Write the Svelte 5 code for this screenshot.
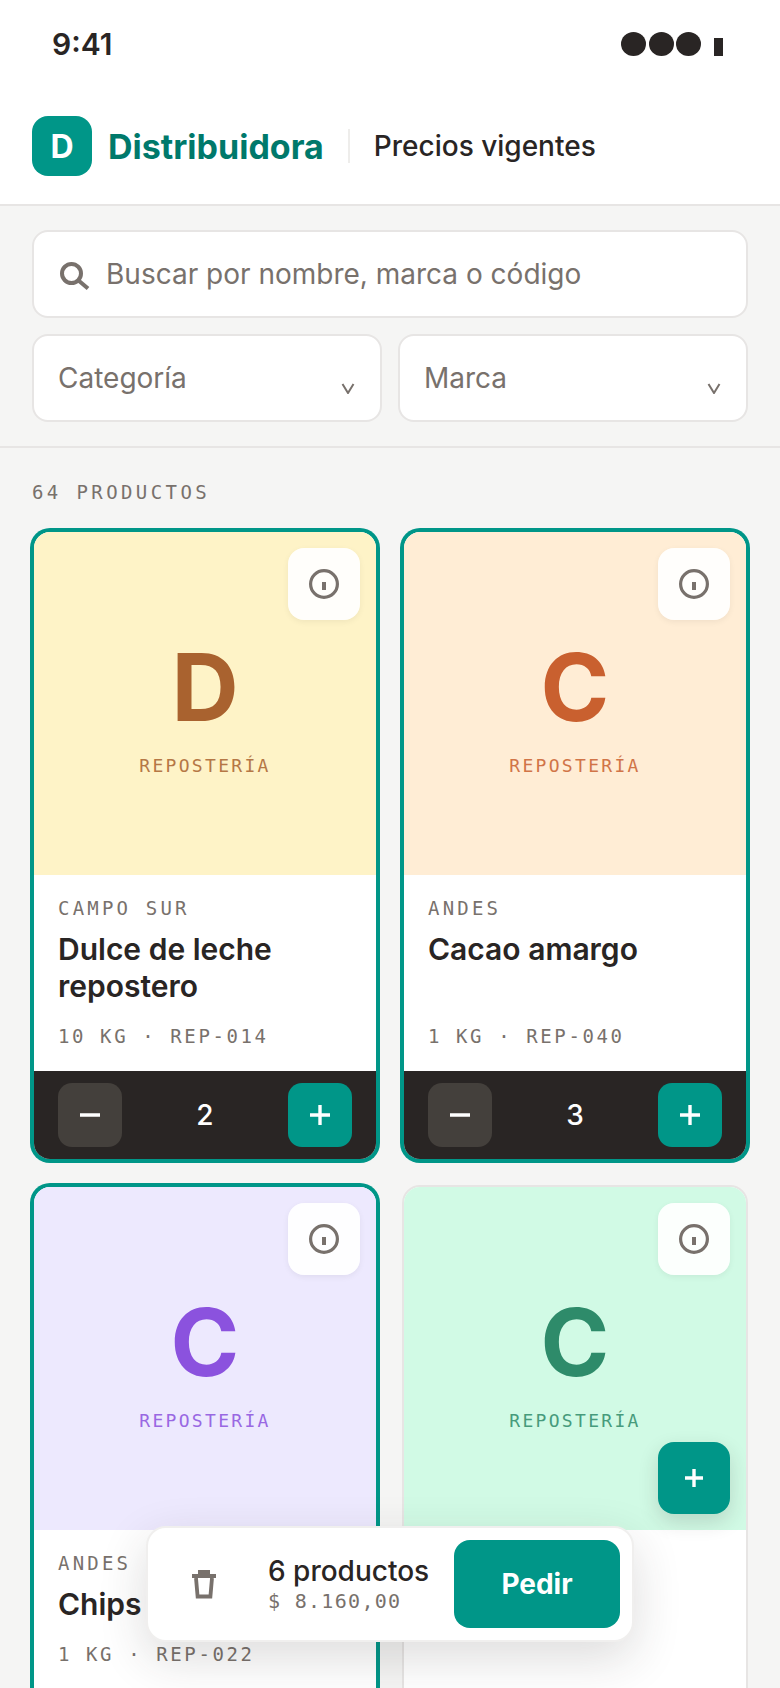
<script>
    const products = [
        { letter: "D", cat: "Repostería", brand: "Campo Sur", name: "Dulce de leche repostero", meta: "10 KG · REP-014", qty: 2, tone: "amber" },
        { letter: "C", cat: "Repostería", brand: "Andes", name: "Cacao amargo", meta: "1 KG · REP-040", qty: 3, tone: "orange" },
        { letter: "C", cat: "Repostería", brand: "Andes", name: "Chips de chocolate", meta: "1 KG · REP-022", qty: 1, tone: "violet" },
        { letter: "C", cat: "Repostería", brand: "Campo Sur", name: "Coco rallado", meta: "1 KG · REP-007", qty: 0, tone: "green" }
    ];
</script>

<div class="page">
    <div class="status">
        <span class="time">9:41</span>
        <div class="signal">
            <i class="dot"></i><i class="dot"></i><i class="dot"></i><i class="batt"></i>
        </div>
    </div>

    <header>
        <div class="logo">D</div>
        <span class="brandname">Distribuidora</span>
        <span class="sep"></span>
        <span class="subtitle">Precios vigentes</span>
    </header>

    <section class="filters">
        <div class="search">
            <svg width="32" height="32" viewBox="0 0 32 32" fill="none" stroke="currentColor" stroke-width="4">
                <circle cx="13.5" cy="15.5" r="9.5" />
                <path d="M20.5 22.5 L30 30.5" />
            </svg>
            <span>Buscar por nombre, marca o código</span>
        </div>
        <div class="selects">
            <div class="select">
                <span>Categoría</span>
                <svg class="chev" width="14" height="11" viewBox="0 0 14 11" fill="none" stroke="currentColor" stroke-width="2"><path d="M1.5 1 L7 10 L12.5 1" /></svg>
            </div>
            <div class="select">
                <span>Marca</span>
                <svg class="chev" width="14" height="11" viewBox="0 0 14 11" fill="none" stroke="currentColor" stroke-width="2"><path d="M1.5 1 L7 10 L12.5 1" /></svg>
            </div>
        </div>
    </section>

    <main>
        <div class="count">64 PRODUCTOS</div>
        <div class="grid">
            {#each products as p}
                <article class="card {p.tone}" class:selected={p.qty > 0}>
                    <div class="thumb">
                        <button class="info" aria-label="Información">
                            <svg width="32" height="32" viewBox="0 0 32 32" fill="none" stroke="#78716c" stroke-width="3.2">
                                <circle cx="16" cy="16" r="13.4" />
                                <path d="M16 14 V22" stroke-width="4" />
                            </svg>
                        </button>
                        <span class="letter">{p.letter}</span>
                        <span class="cat">{p.cat.toUpperCase()}</span>
                        {#if p.qty === 0}
                            <button class="add" aria-label="Agregar">
                                <svg width="24" height="24" viewBox="0 0 24 24" stroke="#fff" stroke-width="3.4"><path d="M12 3 V21 M3 12 H21" /></svg>
                            </button>
                        {/if}
                    </div>
                    <div class="body">
                        <div class="brand">{p.brand.toUpperCase()}</div>
                        <div class="name">{p.name}</div>
                        <div class="meta">{p.meta}</div>
                    </div>
                    {#if p.qty > 0}
                        <div class="qty">
                            <button class="minus" aria-label="Quitar">
                                <svg width="24" height="24" viewBox="0 0 24 24" stroke="#fff" stroke-width="3.4"><path d="M2 12 H22" /></svg>
                            </button>
                            <span>{p.qty}</span>
                            <button class="plus" aria-label="Sumar">
                                <svg width="24" height="24" viewBox="0 0 24 24" stroke="#fff" stroke-width="3.4"><path d="M12 2 V22 M2 12 H22" /></svg>
                            </button>
                        </div>
                    {/if}
                </article>
            {/each}
        </div>
    </main>

    <div class="cart">
        <button class="trash" aria-label="Vaciar">
            <svg width="26" height="30" viewBox="0 0 26 30" fill="none" stroke="#78716c">
                <path d="M7 1 H19 V5 H25 V9 H1 V5 H7 Z" fill="#78716c" stroke="none" />
                <path d="M5 9 L6.6 27.5 H19.4 L21 9" stroke-width="3.8" />
            </svg>
        </button>
        <div class="totals">
            <span class="items">6 productos</span>
            <span class="price">$ 8.160,00</span>
        </div>
        <button class="order">Pedir</button>
    </div>
</div>

<style>
    :global(body) {
        margin: 0;
        background: #f5f5f4;
    }

    .page {
        position: relative;
        width: 780px;
        height: 1688px;
        overflow: hidden;
        background: #f5f5f4;
        color: #292524;
        font-family: Inter, "Liberation Sans", sans-serif;
    }

    button {
        border: none;
        padding: 0;
        font-family: inherit;
        display: flex;
        align-items: center;
        justify-content: center;
    }

    .status {
        height: 88px;
        background: #fff;
        display: flex;
        align-items: center;
        justify-content: space-between;
        padding: 0 57px 0 52px;
        box-sizing: border-box;
    }

    .time {
        font-size: 30px;
        font-weight: 600;
    }

    .signal {
        display: flex;
        align-items: flex-end;
        gap: 2.5px;
    }

    .dot {
        width: 25px;
        height: 24px;
        border-radius: 50%;
        background: #292524;
    }

    .batt {
        width: 9px;
        height: 18px;
        margin-left: 10.5px;
        background: #292524;
    }

    header {
        display: flex;
        align-items: center;
        background: #fff;
        padding: 28px 32px;
        border-bottom: 2px solid #e7e5e4;
    }

    .logo {
        width: 60px;
        height: 60px;
        border-radius: 16px;
        background: #009688;
        color: #fff;
        font-size: 32px;
        font-weight: 700;
        display: flex;
        align-items: center;
        justify-content: center;
    }

    .brandname {
        margin-left: 16px;
        font-size: 34px;
        font-weight: 700;
        color: #00796b;
    }

    .sep {
        width: 2px;
        height: 34px;
        margin: 0 24px;
        background: #eeedeb;
    }

    .subtitle {
        font-size: 28px;
        font-weight: 500;
    }

    .filters {
        padding: 24px 32px;
        border-bottom: 2px solid #e7e5e4;
        display: flex;
        flex-direction: column;
        gap: 16px;
    }

    .search, .select {
        height: 88px;
        box-sizing: border-box;
        background: #fff;
        border: 2px solid #e7e5e4;
        border-radius: 16px;
        display: flex;
        align-items: center;
        color: #78716c;
        font-size: 28px;
    }

    .search {
        padding: 0 24px;
        gap: 16px;
    }

    .selects {
        display: grid;
        grid-template-columns: 1fr 1fr;
        gap: 16px;
    }

    .select {
        justify-content: space-between;
        padding: 0 25px 0 24px;
    }

    .chev {
        margin-top: 20px;
    }

    main {
        padding: 31px 32px 0;
    }

    .count {
        font-family: "DejaVu Sans Mono", monospace;
        font-size: 19px;
        line-height: 26px;
        letter-spacing: 3.4px;
        color: #78716c;
        margin-bottom: 25px;
    }

    .grid {
        display: grid;
        grid-template-columns: 1fr 1fr;
        gap: 24px;
    }

    .card {
        background: #fff;
        border: 2px solid #e7e5e4;
        border-radius: 18px;
        overflow: hidden;
        display: flex;
        flex-direction: column;
    }

    .card.selected {
        border-color: #009688;
        box-shadow: 0 0 0 2px #009688;
    }

    .thumb {
        position: relative;
        height: 343px;
        display: flex;
        flex-direction: column;
        align-items: center;
        justify-content: center;
    }

    .amber .thumb { background: #fef3c7; color: #a9622f; }
    .orange .thumb { background: #ffedd5; color: #c9602f; }
    .violet .thumb { background: #ede9fe; color: #8b52de; }
    .green .thumb { background: #d1fae5; color: #2e8b6a; }

    .letter {
        font-size: 93px;
        font-weight: 700;
        line-height: 116px;
    }

    .cat {
        margin-top: 9px;
        font-family: "DejaVu Sans Mono", monospace;
        font-size: 18px;
        line-height: 24px;
        letter-spacing: 2.3px;
        opacity: 0.85;
    }

    .info {
        position: absolute;
        top: 16px;
        right: 16px;
        width: 72px;
        height: 72px;
        border-radius: 16px;
        background: rgba(255, 255, 255, 0.92);
        box-shadow: 0 2px 6px rgba(0, 0, 0, 0.06);
    }

    .add {
        position: absolute;
        right: 16px;
        bottom: 16px;
        width: 72px;
        height: 72px;
        border-radius: 16px;
        background: #009688;
        box-shadow: 0 8px 20px rgba(41, 37, 36, 0.16);
    }

    .body {
        flex: 1;
        display: flex;
        flex-direction: column;
        padding: 20px 24px 22px;
    }

    .brand, .meta {
        font-family: "DejaVu Sans Mono", monospace;
        font-size: 19px;
        line-height: 26px;
        color: #78716c;
    }

    .brand {
        letter-spacing: 3.2px;
    }

    .name {
        margin: 10px 0 18px;
        font-size: 30px;
        line-height: 37px;
        font-weight: 600;
    }

    .meta {
        margin-top: auto;
        letter-spacing: 2.6px;
    }

    .qty {
        background: #292524;
        padding: 12px 24px;
        display: flex;
        align-items: center;
        justify-content: space-between;
        color: #fff;
        font-size: 28px;
        font-weight: 500;
    }

    .qty button {
        width: 64px;
        height: 64px;
        border-radius: 14px;
    }

    .minus {
        background: #44403c;
    }

    .plus {
        background: #009688;
    }

    .cart {
        position: absolute;
        left: 146px;
        bottom: 46px;
        width: 488px;
        box-sizing: border-box;
        padding: 12px;
        background: #fff;
        border: 2px solid #f0efee;
        border-radius: 20px;
        box-shadow: 0 16px 48px rgba(41, 37, 36, 0.16);
        display: flex;
        align-items: center;
        gap: 20px;
    }

    .trash {
        width: 88px;
        height: 88px;
        background: transparent;
    }

    .totals {
        flex: 1;
        display: flex;
        flex-direction: column;
    }

    .items {
        font-size: 28px;
        line-height: 34px;
        font-weight: 500;
    }

    .price {
        font-family: "DejaVu Sans Mono", monospace;
        font-size: 20px;
        line-height: 26px;
        color: #78716c;
        letter-spacing: 1.3px;
    }

    .order {
        width: 166px;
        height: 88px;
        border-radius: 16px;
        background: #009688;
        color: #fff;
        font-size: 28px;
        font-weight: 700;
    }
</style>
